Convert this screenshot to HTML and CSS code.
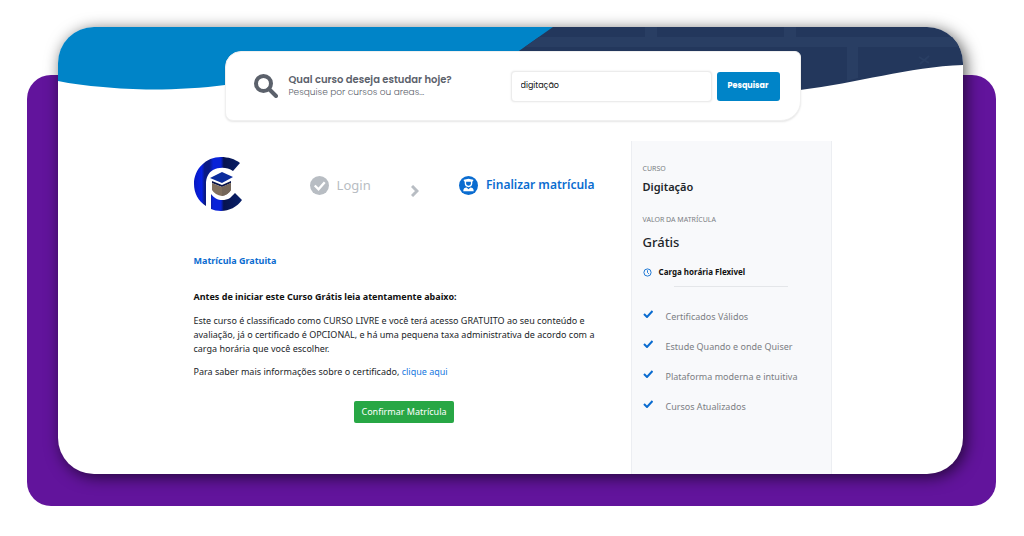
FILE: index.html
```html
<!DOCTYPE html>
<html lang="pt-BR">
<head>
<meta charset="utf-8">
<meta name="viewport" content="width=device-width, initial-scale=1">
<title>Finalizar matrícula</title>
<link rel="stylesheet" href="styles.css">
</head>
<body>
<div class="backdrop">
  <div class="card">
    <svg class="hero" viewBox="0 0 905 64" preserveAspectRatio="none" aria-hidden="true">
      <path fill="#0084c8" d="M0 0H520V58H167C130 63 80 64 45 60Q20 58 0 54Z"/>
      <path fill="#23375c" d="M495 0H905V38C850 40 800 56 742 63H700V26H458Z"/>
      <path fill="#293e63" d="M481 10H905V20H467ZM587 0H599V11H587ZM726 0H738V11H726ZM789 20H800V51L789 54Z"/>
      <path stroke="#293e63" stroke-width="2" d="M861 30l10 6M871 29l-9 8" fill="none"/>
    </svg>

    <form class="search">
      <svg class="search-icon" viewBox="0 0 24 24" aria-hidden="true"><circle cx="9.5" cy="9.5" r="7.5"/><path d="M15 15L22 22"/></svg>
      <label class="search-label" for="q"><strong>Qual curso deseja estudar hoje?</strong><span>Pesquise por cursos ou areas...</span></label>
      <input class="search-input" id="q" type="text" value="digitação">
      <button class="search-button" type="submit">Pesquisar</button>
    </form>

    <div class="content">
      <main class="main">
        <header class="steps">
          <svg class="logo" viewBox="0 0 50 54" role="img" aria-label="Logotipo">
            <defs>
              <linearGradient id="blue" gradientUnits="userSpaceOnUse" x1="0" x2="48" y1="0" y2="0"><stop offset="0" stop-color="#0718c0"/><stop offset=".16" stop-color="#0620e6"/><stop offset=".22" stop-color="#0a1a86"/><stop offset=".32" stop-color="#0a1a86"/><stop offset=".4" stop-color="#0822d8"/><stop offset=".56" stop-color="#0822d8"/><stop offset=".62" stop-color="#07134f"/><stop offset="1" stop-color="#08206a"/></linearGradient>
            </defs>
            <path fill="url(#blue)" d="M46 6L39 14C33 10 25 10 19 13C14 16 12 21 12 27V49C4 44 0 36 0 27C0 12 12 0 27 0C34 0 41 2 46 6Z"/>
            <path fill="url(#blue)" d="M17 37C21 43 29 45 36 41L41 36L48 43C43 50 35 54 27 54Q21 54 17 52Z"/>
            <path fill="#0b2c9c" d="M16 21L28 15L39 20L28 26Z"/>
            <path fill="#071349" d="M18 24L28 28L37 24V26L28 30L18 26Z"/>
            <path fill="#81705f" d="M18 26L28 30L37 26V33Q34 38 28 39Q21 38 18 33Z"/>
            <path fill="#75675a" d="M28 30L37 26V33Q34 38 28 39Z"/>
          </svg>
          <div class="step step-done">
            <svg class="badge" viewBox="0 0 20 20" aria-hidden="true"><circle cx="10" cy="10" r="10"/><path class="line" d="M5 10L9 14L15.5 6.5"/></svg>
            <span>Login</span>
          </div>
          <svg class="chevron" viewBox="0 0 8 12" aria-hidden="true"><path d="M1 1L6 6L1 11"/></svg>
          <div class="step step-current">
            <svg class="badge" viewBox="0 0 20 20" aria-hidden="true"><circle cx="10" cy="10" r="10"/><path fill="#fff" d="M5 4L10 3L15 4V5L14 6V8C14 13 6 13 6 8V6L5 5Z"/><path fill="#0a6cd0" d="M7.500 6H12.500V8C12.500 11 7.500 11 7.500 8Z"/><path fill="#fff" d="M4.500 16C4.500 13 6 12 8 12L10 14L12 12C14 12 15.500 13 15.500 16Z"/></svg>
            <span>Finalizar matrícula</span>
          </div>
        </header>

        <h1 class="title">Matrícula Gratuita</h1>
        <h2 class="lead">Antes de iniciar este Curso Grátis leia atentamente abaixo:</h2>
        <p class="text">Este curso é classificado como CURSO LIVRE e você terá acesso GRATUITO ao seu conteúdo e avaliação, já o certificado é OPCIONAL, e há uma pequena taxa administrativa de acordo com a carga horária que você escolher.</p>
        <p class="text">Para saber mais informações sobre o certificado, <a href="#certificado">clique aqui</a></p>
        <button class="confirm" type="button">Confirmar Matrícula</button>
      </main>

      <aside class="summary">
        <p class="caption">CURSO</p>
        <p class="course">Digitação</p>
        <p class="caption">VALOR DA MATRÍCULA</p>
        <p class="price">Grátis</p>
        <p class="hours"><svg class="clock" viewBox="0 0 10 10" aria-hidden="true"><circle cx="5" cy="5" r="4"/><path d="M5 2.500V5L6.500 6.500"/></svg>Carga horária Flexivel</p>
        <hr class="rule">
        <ul class="benefits">
          <li><svg class="tick" viewBox="0 0 10 8" aria-hidden="true"><path d="M1 4L4 7L9.500 1"/></svg>Certificados Válidos</li>
          <li><svg class="tick" viewBox="0 0 10 8" aria-hidden="true"><path d="M1 4L4 7L9.500 1"/></svg>Estude Quando e onde Quiser</li>
          <li><svg class="tick" viewBox="0 0 10 8" aria-hidden="true"><path d="M1 4L4 7L9.500 1"/></svg>Plataforma moderna e intuitiva</li>
          <li><svg class="tick" viewBox="0 0 10 8" aria-hidden="true"><path d="M1 4L4 7L9.500 1"/></svg>Cursos Atualizados</li>
        </ul>
      </aside>
    </div>
  </div>
</div>
</body>
</html>
```
FILE: styles.css
```css
* { box-sizing: border-box; }

body {
  margin: 0;
  padding: 75px 28px 30px 27px;
  background: #fff;
  color: #212529;
  font-family: "Noto Sans", "Open Sans", sans-serif;
  font-size: 9px;
  line-height: 14px;
}

h1, h2, p, ul { margin: 0; padding: 0; }

.backdrop {
  display: flow-root;
  padding: 0 33px 32px 31px;
  border-radius: 24px;
  background: #62149c;
}

.card {
  position: relative;
  margin-top: -48px;
  padding: 24px 0 0 4px;
  border-radius: 36px;
  background: #fff;
  box-shadow: 3px 3px 16px rgba(0, 0, 0, 0.65);
}

.hero {
  position: absolute;
  top: 0;
  left: 0;
  width: 100%;
  height: 64px;
  border-radius: 36px 36px 0 0;
}

.search {
  position: relative;
  display: flex;
  align-items: center;
  width: 576px;
  max-width: 100%;
  min-height: 70px;
  margin: 0 auto;
  padding: 0 20px 0 28px;
  border: 1px solid #f0f0f0;
  border-radius: 16px 6px 20px 8px;
  background: #fff;
  box-shadow: 0 1px 2px rgba(0, 0, 0, 0.1);
  font-family: Poppins, Inter, sans-serif;
}

.search-icon {
  width: 24px;
  height: 24px;
  margin-right: 11px;
  fill: none;
  stroke: #5b616b;
  stroke-width: 4;
  stroke-linecap: round;
}

.search-label {
  display: grid;
  flex: 1;
  color: #5b616b;
  font-weight: 300;
  line-height: 12px;
}

.search-label strong {
  font-size: 10px;
  font-weight: 600;
}

.search-input {
  width: 201px;
  height: 31px;
  padding: 0 9px;
  border: 1px solid #ececec;
  border-radius: 4px;
  box-shadow: 0 0 2px rgba(0, 0, 0, 0.1);
  color: #111;
  font: inherit;
  font-size: 8px;
}

.search-button {
  width: 63px;
  height: 29px;
  margin-left: 5px;
  padding: 0;
  border: 0;
  border-radius: 3px;
  background: #0084c8;
  color: #fff;
  font: inherit;
  font-size: 8px;
  font-weight: 700;
}

.content {
  display: grid;
  grid-template-columns: 1fr 201px;
  width: 638px;
  max-width: 100%;
  margin: 20px auto 0;
}

.main { padding: 16px 16px 0 0; }

.steps {
  display: flex;
  align-items: center;
  justify-content: space-between;
  margin-right: 20px;
}

.logo { width: 50px; height: 54px; margin-right: 26px; }

.step {
  display: flex;
  align-items: center;
  gap: 8px;
  margin-top: 2px;
  font-size: 12px;
}

.step-done { color: #b8bdc3; fill: #b8bdc3; font-size: 13px; }
.step-current { color: #0a6cd0; fill: #0a6cd0; font-weight: 600; }

.badge { width: 19px; height: 19px; }

.line {
  fill: none;
  stroke: #fff;
  stroke-width: 2.5;
}

.chevron {
  width: 8px;
  height: 12px;
  margin-top: 14px;
  fill: none;
  stroke: #b8bdc3;
  stroke-width: 3;
}

.title {
  margin-top: 43px;
  color: #0a6cd0;
  font-size: 9px;
  font-weight: 700;
}

.lead {
  margin: 22px 0 10px;
  color: #111;
  font-size: 9px;
  font-weight: 700;
}

.text { margin-bottom: 9px; }

.text a { color: #1478e0; text-decoration: none; }

.confirm {
  display: block;
  margin: 22px auto 0;
  padding: 4px 7px;
  border: 0;
  border-radius: 2px;
  background: #28a745;
  color: #fff;
  font: inherit;
}

.summary {
  min-height: 333px;
  padding: 21px 11px;
  border: 1px solid #eceef2;
  border-width: 0 1px;
  background: #f8f9fb;
}

.caption {
  color: #7b7e83;
  font-size: 7px;
}

.course {
  margin: 2px 0 17px;
  font-size: 11px;
  font-weight: 600;
  line-height: 18px;
}

.price {
  margin: 6px 0 14px;
  font-size: 13px;
  font-weight: 500;
  line-height: 18px;
}

.hours {
  display: flex;
  align-items: center;
  gap: 7px;
  color: #111;
  font-size: 8px;
  font-weight: 700;
}

.clock {
  width: 9px;
  height: 9px;
  fill: none;
  stroke: #0a6cd0;
}

.rule {
  width: 114px;
  margin: 7px auto 0;
  border: 0;
  border-top: 1px solid #e4e6e9;
}

.benefits {
  display: grid;
  gap: 16px;
  margin-top: 23px;
  color: #7b7e83;
  list-style: none;
}

.benefits li { display: flex; gap: 13px; }

.tick {
  width: 10px;
  height: 8px;
  fill: none;
  stroke: #0a6cd0;
  stroke-width: 2;
}
```
